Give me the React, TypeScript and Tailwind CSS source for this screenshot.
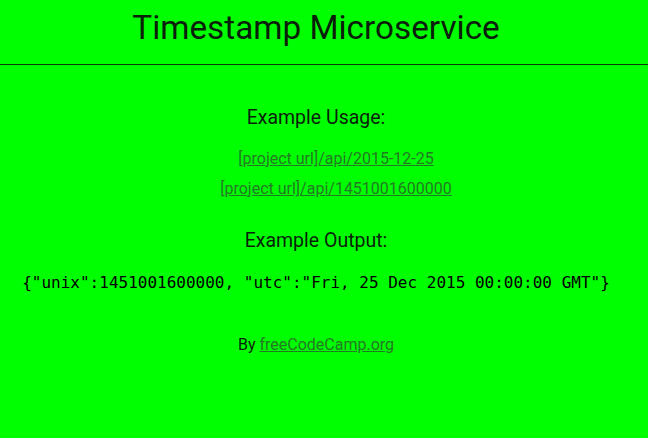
export default function App() {
  return (
    <div className="min-h-[438px] bg-[#00ff00] text-[#0a1f0a]" style={{ fontFamily: "Roboto, 'Noto Sans', sans-serif" }}>
      <div className="border-b border-[#0d3a0d] flex justify-center pr-[16px] pt-[8px] h-[65px]">
        <h1 className="text-[33.3px] leading-[40px] font-normal">Timestamp Microservice</h1>
      </div>
      <div className="flex flex-col items-center pr-[16px]">
        <h3 className="mt-[42px] text-[19.5px] leading-[22px] font-normal">Example Usage:</h3>
        <ul className="mt-[19px] pl-[40px] flex flex-col items-center gap-[8px] text-[16px] leading-[22px] text-[#247a24]">
          <li><a href="#" className="underline">[project url]/api/2015-12-25</a></li>
          <li><a href="#" className="underline">[project url]/api/1451001600000</a></li>
        </ul>
        <h3 className="mt-[30px] text-[19.5px] leading-[22px] font-normal">Example Output:</h3>
        <code className="mt-[20px] text-[16px] leading-[22px] text-black" style={{ fontFamily: "'DejaVu Sans Mono', monospace" }}>
          {'{"unix":1451001600000, "utc":"Fri, 25 Dec 2015 00:00:00 GMT"}'}
        </code>
        <p className="mt-[40px] text-[16px] leading-[22px]">
          By <a href="#" className="underline text-[#247a24]">freeCodeCamp.org</a>
        </p>
      </div>
    </div>
  );
}
